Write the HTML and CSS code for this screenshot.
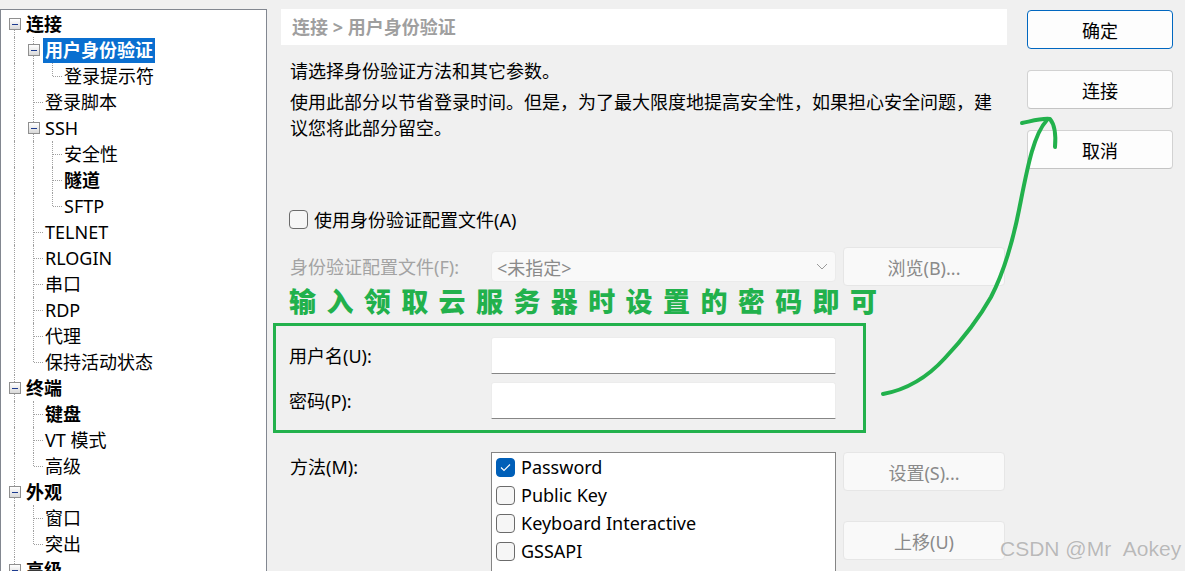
FILE: index.html
```html
<!DOCTYPE html>
<html lang="zh-CN">
<head>
<meta charset="utf-8">
<title>会话选项</title>
<link rel="stylesheet" href="styles.css">
</head>
<body>
<div class="app">
  <nav class="tree">
    <div class="row"><span class="c x down"><i class="box"></i></span><span class="lbl b">连接</span></div>
    <div class="row"><span class="c v"></span><span class="c x up down"><i class="box"></i></span><span class="lbl b sel">用户身份验证</span></div>
    <div class="row"><span class="c v"></span><span class="c v"></span><span class="c l"></span><span class="lbl">登录提示符</span></div>
    <div class="row"><span class="c v"></span><span class="c t"></span><span class="lbl">登录脚本</span></div>
    <div class="row"><span class="c v"></span><span class="c x up down"><i class="box"></i></span><span class="lbl">SSH</span></div>
    <div class="row"><span class="c v"></span><span class="c v"></span><span class="c t"></span><span class="lbl">安全性</span></div>
    <div class="row"><span class="c v"></span><span class="c v"></span><span class="c t"></span><span class="lbl b">隧道</span></div>
    <div class="row"><span class="c v"></span><span class="c v"></span><span class="c l"></span><span class="lbl">SFTP</span></div>
    <div class="row"><span class="c v"></span><span class="c t"></span><span class="lbl">TELNET</span></div>
    <div class="row"><span class="c v"></span><span class="c t"></span><span class="lbl">RLOGIN</span></div>
    <div class="row"><span class="c v"></span><span class="c t"></span><span class="lbl">串口</span></div>
    <div class="row"><span class="c v"></span><span class="c t"></span><span class="lbl">RDP</span></div>
    <div class="row"><span class="c v"></span><span class="c t"></span><span class="lbl">代理</span></div>
    <div class="row"><span class="c v"></span><span class="c l"></span><span class="lbl">保持活动状态</span></div>
    <div class="row"><span class="c x up down"><i class="box"></i></span><span class="lbl b">终端</span></div>
    <div class="row"><span class="c v"></span><span class="c t"></span><span class="lbl b">键盘</span></div>
    <div class="row"><span class="c v"></span><span class="c t"></span><span class="lbl">VT 模式</span></div>
    <div class="row"><span class="c v"></span><span class="c l"></span><span class="lbl">高级</span></div>
    <div class="row"><span class="c x up down"><i class="box"></i></span><span class="lbl b">外观</span></div>
    <div class="row"><span class="c v"></span><span class="c t"></span><span class="lbl">窗口</span></div>
    <div class="row"><span class="c v"></span><span class="c l"></span><span class="lbl">突出</span></div>
    <div class="row"><span class="c x up"><i class="box"></i></span><span class="lbl b">高级</span></div>
  </nav>

  <main class="main">
    <div class="crumb">连接 &gt; 用户身份验证</div>
    <p class="intro">请选择身份验证方法和其它参数。</p>
    <p class="desc">使用此部分以节省登录时间。但是，为了最大限度地提高安全性，如果担心安全问题，建<br>议您将此部分留空。</p>

    <label class="chk-row"><span class="chk"></span>使用身份验证配置文件(A)</label>

    <div class="form-row profile">
      <span class="flabel dis">身份验证配置文件(F):</span>
      <div class="combo"><span>&lt;未指定&gt;</span>
        <svg class="chev" width="12" height="7" viewBox="0 0 12 7"><path d="M1 1 L6 6 L11 1" fill="none" stroke="#9a9a9a" stroke-width="1"/></svg>
      </div>
      <button class="btn dis">浏览(B)...</button>
    </div>

    <div class="note">输入领取云服务器时设置的密码即可</div>

    <div class="hl">
      <span class="flabel">用户名(U):</span><span class="input"></span>
      <span class="flabel">密码(P):</span><span class="input"></span>
    </div>

    <div class="form-row method">
      <span class="flabel">方法(M):</span>
      <div class="list">
        <div class="item"><span class="chk on"><svg width="11" height="9" viewBox="0 0 11 9"><path d="M1 4.5 L4 7.5 L10 1.5" fill="none" stroke="#fff" stroke-width="1.1"/></svg></span>Password</div>
        <div class="item"><span class="chk"></span>Public Key</div>
        <div class="item"><span class="chk"></span>Keyboard Interactive</div>
        <div class="item"><span class="chk"></span>GSSAPI</div>
      </div>
      <div class="side-btns">
        <button class="btn dis">设置(S)...</button>
        <button class="btn dis">上移(U)</button>
      </div>
    </div>
  </main>

  <aside class="actions">
    <button class="btn def">确定</button>
    <button class="btn">连接</button>
    <button class="btn">取消</button>
  </aside>
</div>

<svg class="arrow" width="1185" height="571" viewBox="0 0 1185 571">
  <path d="M883 394 C905 390 925 380 945 358 C962 340 978 320 991 297 C1004 272 1012 245 1019 210 C1027 170 1033 135 1047 120" fill="none" stroke="#22b14c" stroke-width="4" stroke-linecap="round"/>
  <path d="M1022 123 C1032 121 1042 118 1050 119 C1055 125 1056 135 1055 147" fill="none" stroke="#22b14c" stroke-width="4" stroke-linecap="round" stroke-linejoin="round"/>
</svg>
<div class="wm">CSDN @Mr&nbsp;&nbsp;Aokey</div>
</body>
</html>
```

FILE: styles.css
```css
* { box-sizing: border-box; }
html, body { margin: 0; padding: 0; }
body {
  width: 1185px;
  height: 571px;
  overflow: hidden;
  background: #f0f0f0;
  font-family: "Noto Sans", "Noto Sans CJK SC", sans-serif;
  font-size: 18px;
  color: #000;
  position: relative;
}
.app { display: flex; align-items: flex-start; }

/* ---------- tree ---------- */
.tree {
  flex: none;
  width: 267px;
  height: 620px;
  margin-top: 9px;
  background: #fff;
  border: 1px solid #828790;
  padding: 1px 0 0 4px;
}
.row { display: flex; align-items: center; height: 26px; }
.c { flex: none; width: 19px; height: 26px; position: relative; display: flex; align-items: center; }
.c.v::before, .c.t::before, .c.l::before, .c.up::before {
  content: ""; position: absolute; left: 9px; top: 0; bottom: 0;
  border-left: 1px dotted #a0a0a0;
}
.c.l::before, .c.up::before { bottom: 13px; }
.c.t::after, .c.l::after {
  content: ""; position: absolute; left: 10px; right: 0; top: 13px;
  border-top: 1px dotted #a0a0a0;
}
.c.down::after {
  content: ""; position: absolute; left: 9px; top: 13px; bottom: 0;
  border-left: 1px dotted #a0a0a0;
}
.box {
  position: relative; z-index: 1;
  width: 12px; height: 12px; margin-left: 4px;
  border: 1px solid #8f8f8f;
  background: linear-gradient(#ffffff, #d9d9d9);
  display: flex; align-items: center; justify-content: center;
}
.box::before { content: ""; width: 6px; height: 1px; background: #1d3b8f; }
.lbl { padding: 0 2px; margin-left: 0; line-height: 25px; white-space: nowrap; }
.lbl.b { font-weight: 700; }
.lbl.sel { background: #0a6fd0; color: #fff; }

/* ---------- main ---------- */
.main { flex: none; width: 726px; margin-left: 14px; }
.crumb {
  margin-top: 9px; height: 36px; background: #fff;
  padding-left: 11px; line-height: 36px;
  font-weight: 700; color: #9f9f9f;
}
.intro { margin: 13px 0 0 9px; line-height: 26px; }
.desc { margin: 5px 0 0 9px; line-height: 26px; }
.chk-row { display: flex; align-items: center; height: 26px; margin-top: 65px; padding-left: 8px; }
.chk {
  flex: none; width: 19px; height: 19px; margin-right: 6px;
  border: 1px solid #6b6b6b; border-radius: 4px; background: #f6f6f6;
  display: flex; align-items: center; justify-content: center;
}
.chk.on { background: #005fb8; border-color: #005fb8; }

.form-row { display: grid; grid-template-columns: 203px 345px 162px; column-gap: 7px; }
.profile { margin-top: 15px; align-items: center; height: 39px; }
.flabel { padding-left: 9px; line-height: 30px; white-space: nowrap; }
.flabel.dis { color: #a3a3a3; }
.combo {
  height: 31px; background: #f9f9f9; border: 1px solid #ebebeb; border-radius: 4px;
  display: flex; align-items: center; justify-content: space-between;
  padding: 0 7px 0 5px; color: #8a8a8a;
}
.btn {
  font: inherit; color: #000; height: 39px; width: 100%;
  background: #fdfdfd; border: 1px solid #d2d2d2; border-bottom-color: #c4c4c4;
  border-radius: 4px; padding: 0;
}
.btn.dis { background: #f9f9f9; border-color: #e6e6e6; color: #8a8a8a; }
.btn.def { border: 1px solid #0067c0; }

.note {
  margin-top: 0; height: 30px; line-height: 30px; padding-left: 8px;
  font-family: "Noto Sans CJK SC", sans-serif; font-weight: 900;
  font-size: 27px; letter-spacing: 10.4px; color: #22b14c; white-space: nowrap;
}
.hl {
  margin: 7px 0 0 -8px; width: 593px;
  border: 3px solid #22b14c;
  padding: 11px 0 11px 4px;
  display: grid; grid-template-columns: 211px 345px; row-gap: 8px; align-items: center;
}
.input {
  height: 37px; background: #fff;
  border: 1px solid #ececec; border-bottom: 1px solid #868686; border-radius: 3px 3px 0 0;
}

.method { margin-top: 19px; align-items: start; }
.list { height: 140px; background: #fff; border: 1px solid #858585; padding: 0 0 0 4px; }
.item { display: flex; align-items: center; height: 28px; }
.item .chk { margin-right: 6px; }
.side-btns { display: flex; flex-direction: column; gap: 30px; }

/* ---------- right buttons ---------- */
.actions { flex: none; width: 146px; margin-left: 20px; margin-top: 10px; display: flex; flex-direction: column; gap: 21px; }

/* ---------- overlays ---------- */
.arrow { position: absolute; left: 0; top: 0; pointer-events: none; }
.wm {
  position: absolute; left: 1000px; top: 537px;
  font-family: "Liberation Sans", sans-serif; font-size: 21px; color: #b9b9b9;
  text-shadow: 0 0 1px #fff; white-space: nowrap;
}
```
